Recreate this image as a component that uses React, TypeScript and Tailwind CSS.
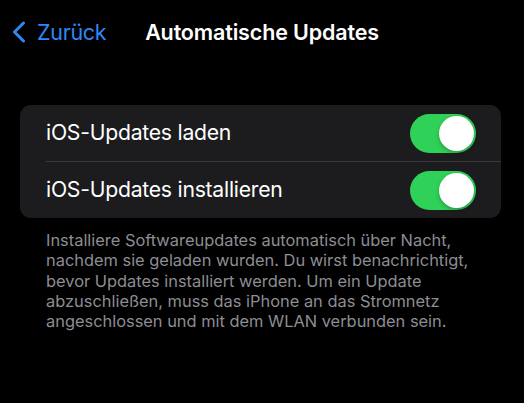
import React from "react";

function Toggle() {
  return (
    <div className="flex h-[39px] w-[66px] items-center justify-end rounded-full bg-[#30d158] p-[2px]">
      <div className="h-[35px] w-[35px] rounded-full bg-white shadow-[0_2px_4px_rgba(0,0,0,0.25)]" />
    </div>
  );
}

export default function App() {
  const font = { fontFamily: "Inter, 'Noto Sans', sans-serif" };
  return (
    <div className="h-[403px] w-[524px] bg-black text-white" style={font}>
      <div className="grid h-[64px] grid-cols-[1fr_auto_1fr] items-center">
        <div className="flex items-center pl-[11px] text-[#2f87f7]">
          <svg width="16" height="22" viewBox="0 0 16 22" className="mr-[10px]">
            <path d="M12.5 2 L3.5 11 L12.5 20" fill="none" stroke="#2f87f7" strokeWidth="3" strokeLinecap="round" strokeLinejoin="round" />
          </svg>
          <span className="text-[21.5px] tracking-[-0.3px]">Zurück</span>
        </div>
        <div className="text-[21.5px] font-semibold tracking-[-0.15px]">Automatische Updates</div>
        <div />
      </div>
      <div className="ml-[20px] mt-[41px] w-[481px] rounded-[11px] bg-[#1c1c1e]">
        <div className="flex h-[56px] items-center justify-between pl-[26px] pr-[25px]">
          <span className="text-[21.2px] tracking-[-0.25px]">iOS-Updates laden</span>
          <Toggle />
        </div>
        <div className="ml-[26px] h-px bg-[#38383a]" />
        <div className="flex h-[56px] items-center justify-between pl-[26px] pr-[25px]">
          <span className="text-[21.2px] tracking-[-0.25px]">iOS-Updates installieren</span>
          <Toggle />
        </div>
      </div>
      <div className="ml-[46px] mt-[12px] text-[16.4px] leading-[20.3px] text-[#8d8d93]">
        Installiere Softwareupdates automatisch über Nacht,
        <br />
        nachdem sie geladen wurden. Du wirst benachrichtigt,
        <br />
        bevor Updates installiert werden. Um ein Update
        <br />
        abzuschließen, muss das iPhone an das Stromnetz
        <br />
        angeschlossen und mit dem WLAN verbunden sein.
      </div>
    </div>
  );
}
